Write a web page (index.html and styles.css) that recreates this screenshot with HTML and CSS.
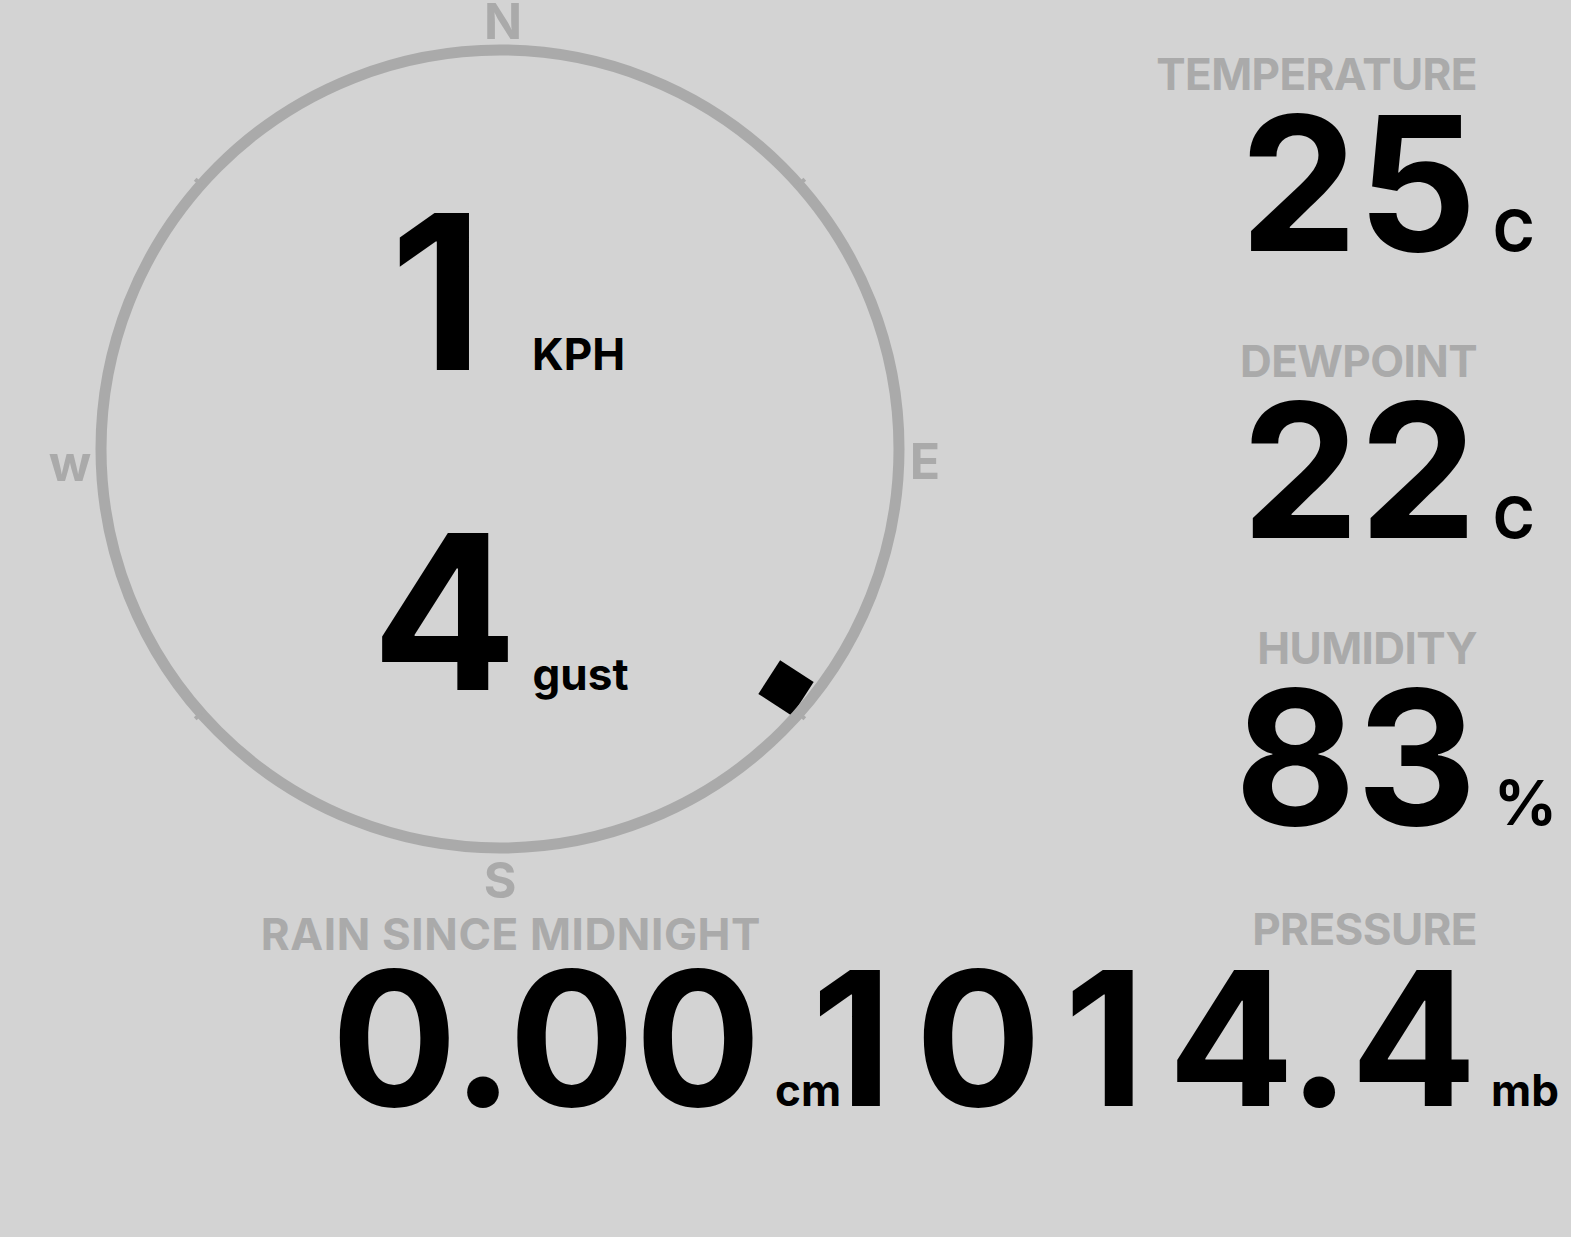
FILE: index.html
```html
<!DOCTYPE html>
<html lang="en">
<head>
<meta charset="utf-8">
<title>Weather</title>
<link rel="stylesheet" href="styles.css">
</head>
<body>
<div class="dash">
  <div class="top">
    <div class="compass">
      <div class="needle"></div>
      <svg class="ring" width="1000" height="907" viewBox="0 0 1000 907">
        <circle cx="500" cy="449" r="399" fill="none" stroke="#aaaaaa" stroke-width="11"/>
        <g stroke="#aaaaaa" stroke-width="4">
          <line x1="798.9" y1="184.5" x2="804.8" y2="179.2"/>
          <line x1="201.1" y1="184.5" x2="195.2" y2="179.2"/>
          <line x1="201.1" y1="713.5" x2="195.2" y2="718.8"/>
          <line x1="798.9" y1="713.5" x2="804.8" y2="718.8"/>
        </g>
      </svg>
      <span class="dir dir-n">N</span>
      <span class="dir dir-w">w</span>
      <span class="dir dir-e">E</span>
      <span class="dir dir-s">S</span>
      <div class="readouts">
        <div class="reading reading-speed"><span class="big">1</span><span class="unit-sm">KPH</span></div>
        <div class="reading reading-gust"><span class="big">4</span><span class="unit-sm">gust</span></div>
      </div>
    </div>
    <div class="stats">
      <div class="stat">
        <div class="label">TEMPERATURE</div>
        <div class="value"><span class="num">25</span><span class="unit">C</span></div>
      </div>
      <div class="stat">
        <div class="label">DEWPOINT</div>
        <div class="value"><span class="num">22</span><span class="unit">C</span></div>
      </div>
      <div class="stat">
        <div class="label">HUMIDITY</div>
        <div class="value"><span class="num">83</span><span class="unit unit-pct">%</span></div>
      </div>
    </div>
  </div>
  <div class="bottom">
    <div class="stat rain">
      <div class="label">RAIN SINCE MIDNIGHT</div>
      <div class="value"><span class="num">0.00</span><span class="unit unit-small">cm</span></div>
    </div>
    <div class="stat pressure">
      <div class="label">PRESSURE</div>
      <div class="value"><span class="num"><span class="spaced">101</span>4.4</span><span class="unit unit-small">mb</span></div>
    </div>
  </div>
</div>
</body>
</html>
```
FILE: styles.css
```css
html, body {
  margin: 0;
  padding: 0;
  background: #d3d3d3;
}

body {
  font-family: Inter, "Open Sans", "DejaVu Sans", sans-serif;
  font-weight: 700;
  color: #000;
}

.dash {
  width: 1571px;
  height: 1237px;
  padding-right: 94px;
  box-sizing: border-box;
  overflow: hidden;
}

.top {
  display: flex;
  height: 907px;
}

.compass {
  position: relative;
  width: 1000px;
  flex: none;
}

.ring {
  position: absolute;
  left: 0;
  top: 0;
}

.dir {
  position: absolute;
  font-size: 50px;
  line-height: 40px;
  color: #aaaaaa;
  transform: translateX(-50%);
}

.dir-n { left: 503px; top: 1px; }
.dir-w { left: 70px; top: 443px; }
.dir-e { left: 925px; top: 441px; }
.dir-s { left: 500px; top: 860px; }

.needle {
  position: absolute;
  left: 766px;
  top: 668px;
  width: 40px;
  height: 40px;
  background: #000;
  transform: rotate(33deg);
}

.readouts {
  display: flex;
  flex-direction: column;
  align-items: center;
  gap: 104px;
  padding-top: 184px;
}

.reading {
  display: flex;
  align-items: baseline;
}

.big {
  font-size: 216px;
  line-height: 216px;
}

.unit-sm {
  font-size: 44px;
}

.reading-speed {
  margin-left: 15px;
}

.reading-speed .unit-sm {
  margin-left: 49px;
}

.reading-gust .unit-sm {
  margin-left: 15px;
}

.stats {
  flex: 1;
  display: flex;
  flex-direction: column;
  gap: 74px;
  padding-top: 52px;
}

.stat {
  display: flex;
  flex-direction: column;
  align-items: flex-end;
}

.label {
  font-size: 44px;
  line-height: 44px;
  color: #aaaaaa;
  letter-spacing: -0.6px;
  white-space: nowrap;
}

.value {
  display: flex;
  align-items: baseline;
  justify-content: flex-end;
  margin-top: 7px;
  margin-right: -100px;
  white-space: nowrap;
}

.num {
  font-size: 187px;
  line-height: 160px;
}

.spaced {
  letter-spacing: 23px;
}

.unit {
  width: 100px;
  box-sizing: border-box;
  padding-left: 16px;
  font-size: 56px;
}

.unit-pct {
  font-size: 62px;
  padding-left: 17px;
}

.unit-small {
  font-size: 44px;
  padding-left: 14px;
}

.bottom {
  display: flex;
}

.rain {
  width: 761px;
  flex: none;
}

.rain .label {
  margin-top: 5px;
  letter-spacing: 0.6px;
}

.rain .value {
  margin-top: 2px;
}

.rain .unit-small {
  padding-left: 14px;
}

.pressure {
  flex: 1;
}
```
